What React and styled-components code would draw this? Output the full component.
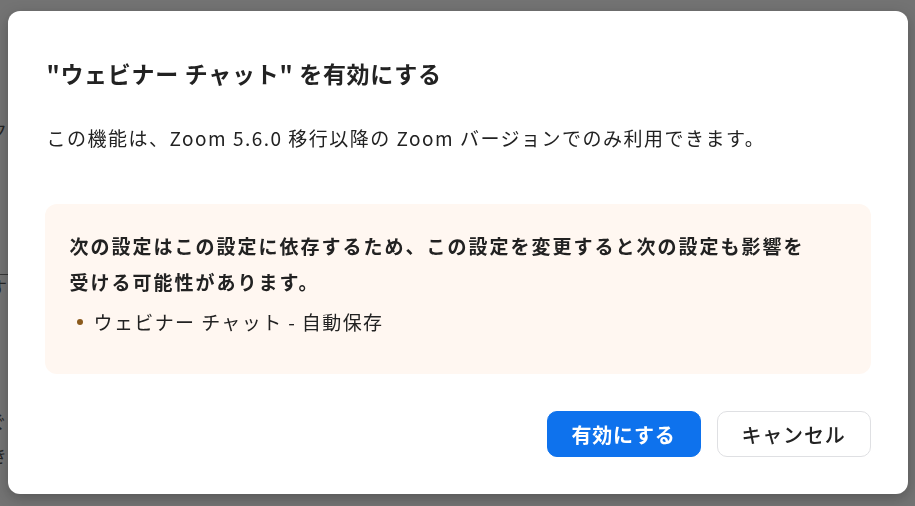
import React from "react";
import styled, { createGlobalStyle } from "styled-components";

const GlobalStyle = createGlobalStyle`
  html, body {
    margin: 0;
    padding: 0;
    width: 915px;
    height: 506px;
    overflow: hidden;
    background: #fff;
    font-family: "Noto Sans CJK JP", "Noto Sans", sans-serif;
  }
`;

// page behind the modal, only a sliver of it peeks out on the left
const Page = styled.div`
  width: 915px;
  height: 506px;
  display: flex;
  flex-direction: column;
  align-items: flex-start;
  padding: 118px 0 0 0;
  box-sizing: border-box;
  color: #222;
  font-size: 18px;
`;

const BackLine = styled.div`
  margin-left: -11px;
  margin-top: ${(p) => p.$gap || 0}px;
  height: 24px;
  line-height: 24px;
  width: ${(p) => (p.$rule ? "60px" : "auto")};
  border-top: ${(p) => (p.$rule ? "1px solid #555" : "none")};
`;

const Backdrop = styled.div`
  position: fixed;
  inset: 0;
  background: rgba(40, 40, 40, 0.65);
  display: flex;
  justify-content: center;
  align-items: flex-start;
  padding-top: 11px;
  box-sizing: border-box;
`;

const Dialog = styled.div`
  width: 900px;
  height: 483px;
  background: #fff;
  border-radius: 12px;
  box-shadow: 0 4px 14px rgba(0, 0, 0, 0.25);
  display: flex;
  flex-direction: column;
  padding: 48px 37px 37px 37px;
  box-sizing: border-box;
  color: #222;
`;

const Title = styled.h2`
  margin: 0 0 0 2px;
  font-size: 23px;
  line-height: 28px;
  font-weight: 700;
  letter-spacing: 0.7px;
`;

const Description = styled.p`
  margin: 39px 0 0 2px;
  font-size: 19px;
  line-height: 24px;
  font-weight: 400;
  letter-spacing: 1.5px;
`;

const Notice = styled.div`
  margin-top: 54px;
  background: #fff7f1;
  border-radius: 12px;
  padding: 24px 60px 40px 25px;
  .lead {
    margin: 0;
    font-size: 19px;
    line-height: 36px;
    font-weight: 700;
    letter-spacing: 2px;
  }
  ul {
    margin: 10px 0 0 0;
    padding: 0;
    list-style: none;
  }
`;

const Item = styled.li`
  display: flex;
  align-items: center;
  gap: 11px;
  font-size: 19px;
  line-height: 24px;
  letter-spacing: 1.4px;
  padding-left: 7px;
  &::before {
    content: "";
    width: 6px;
    height: 6px;
    border-radius: 50%;
    background: #8b5a1c;
  }
`;

const Footer = styled.div`
  margin-top: auto;
  display: flex;
  justify-content: flex-end;
  gap: 16px;
`;

const Button = styled.button`
  width: 154px;
  height: 46px;
  border-radius: 10px;
  font-family: inherit;
  font-size: 20px;
  font-weight: ${(p) => (p.$primary ? 700 : 500)};
  color: ${(p) => (p.$primary ? "#fff" : "#222")};
  background: ${(p) => (p.$primary ? "#0e72ed" : "#fff")};
  border: 1px solid ${(p) => (p.$primary ? "#0e72ed" : "#dfe0e3")};
  cursor: pointer;
  letter-spacing: 0.8px;
`;

const App = () => {
  return (
    <>
      <GlobalStyle />
      <Page>
        <BackLine>ク</BackLine>
        <BackLine $gap={132} $rule>
          す
        </BackLine>
        <BackLine $gap={110}>ぐ</BackLine>
        <BackLine $gap={10}>き</BackLine>
      </Page>
      <Backdrop>
        <Dialog>
          <Title>"ウェビナー チャット" を有効にする</Title>
          <Description>
            この機能は、Zoom 5.6.0 移行以降の Zoom バージョンでのみ利用できます。
          </Description>
          <Notice>
            <p className="lead">
              次の設定はこの設定に依存するため、この設定を変更すると次の設定も影響を受ける可能性があります。
            </p>
            <ul>
              <Item>ウェビナー チャット - 自動保存</Item>
            </ul>
          </Notice>
          <Footer>
            <Button $primary>有効にする</Button>
            <Button>キャンセル</Button>
          </Footer>
        </Dialog>
      </Backdrop>
    </>
  );
};

export default App;
